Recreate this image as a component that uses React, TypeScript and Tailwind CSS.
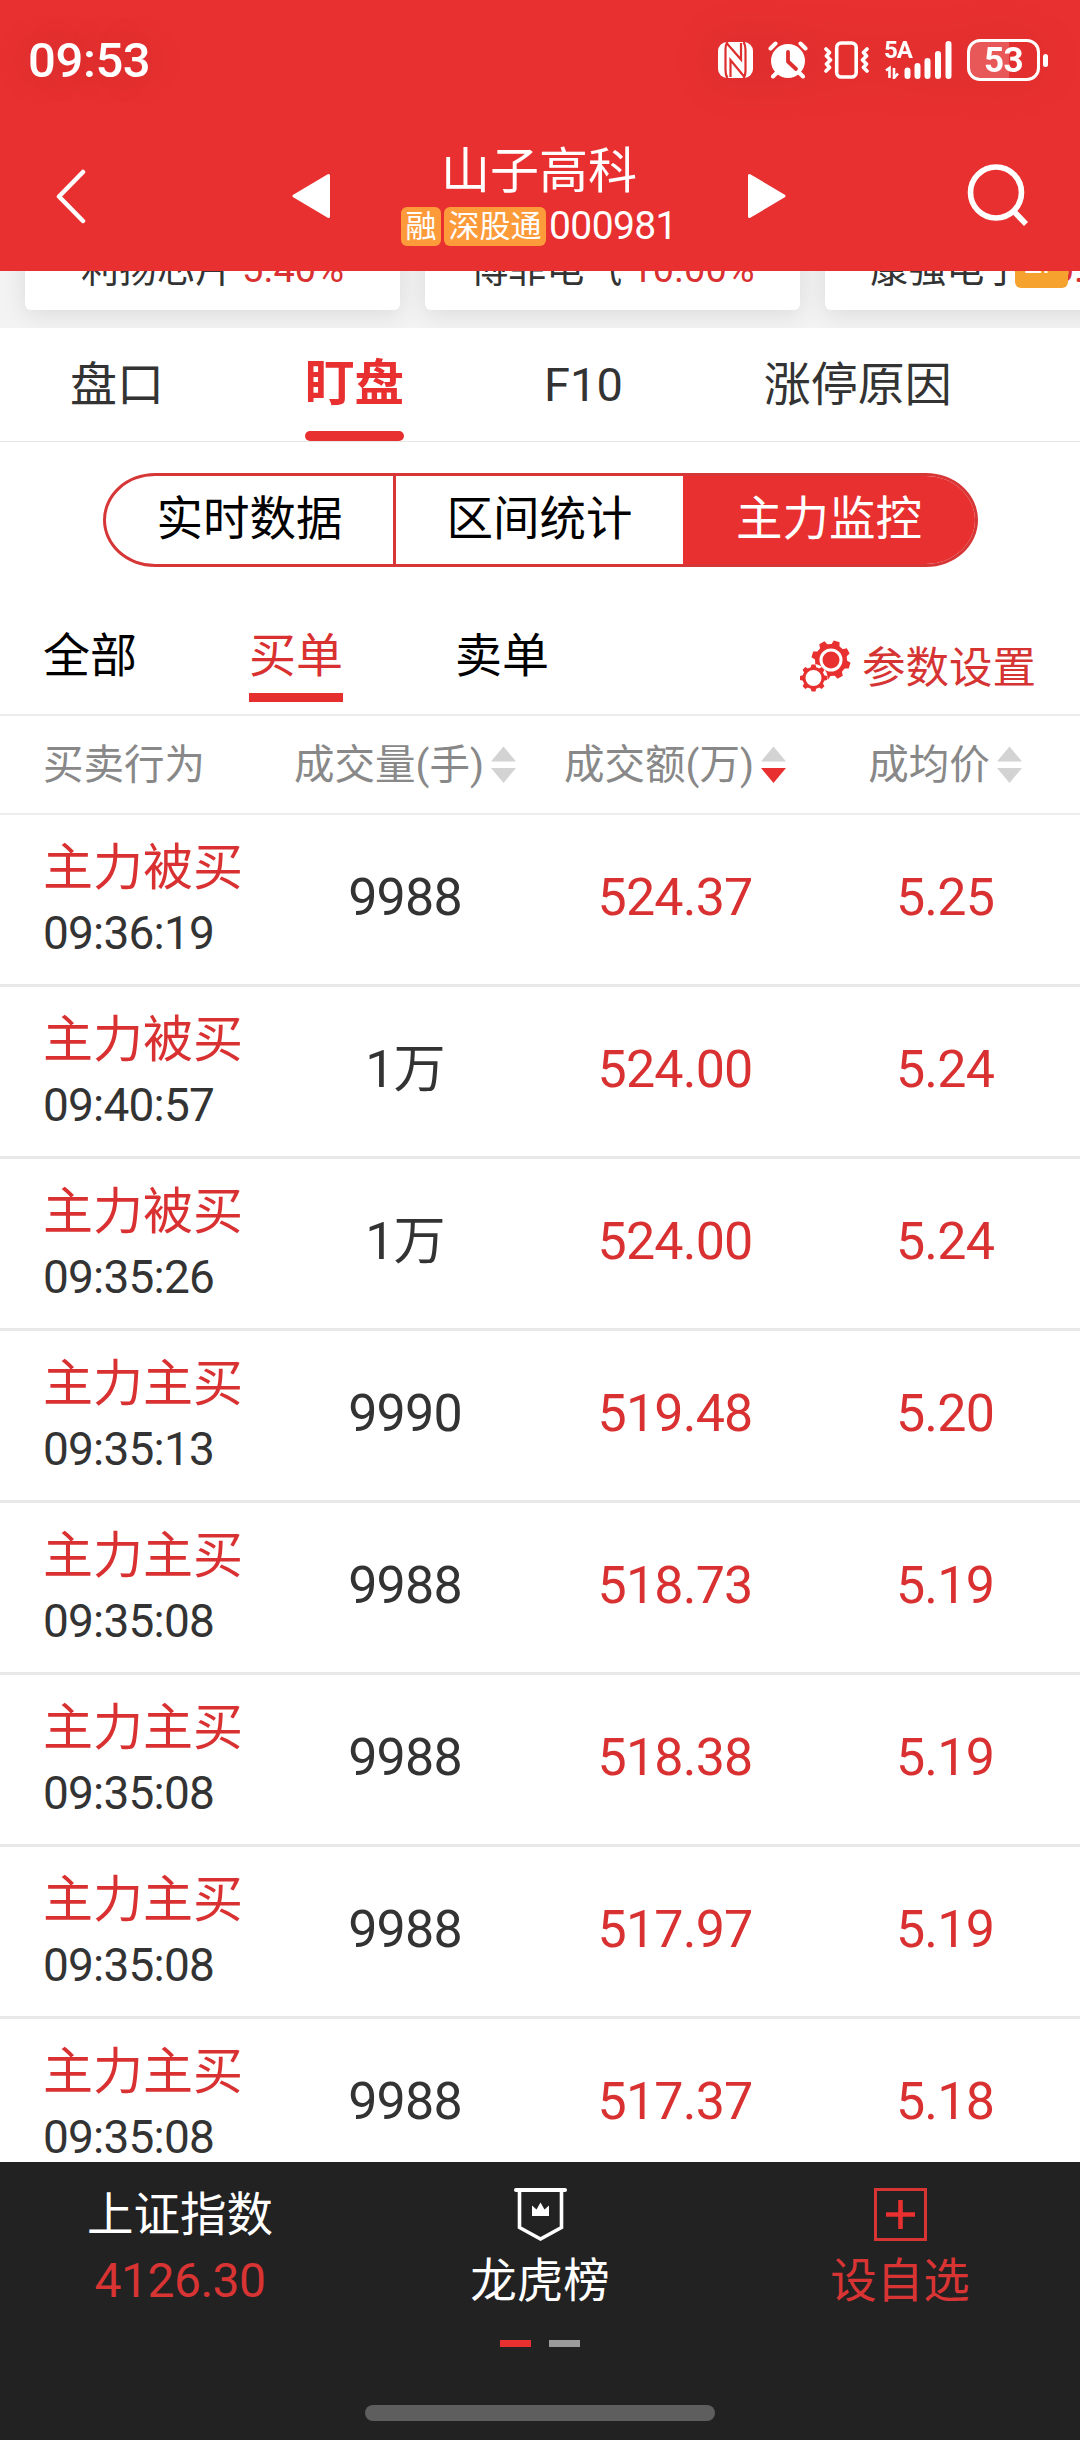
import { clsx } from "clsx";

type Order = {
  action: string;
  time: string;
  volume: string;
  amount: string;
  price: string;
};

const orders: Order[] = [
  { action: "主力被买", time: "09:36:19", volume: "9988", amount: "524.37", price: "5.25" },
  { action: "主力被买", time: "09:40:57", volume: "1万", amount: "524.00", price: "5.24" },
  { action: "主力被买", time: "09:35:26", volume: "1万", amount: "524.00", price: "5.24" },
  { action: "主力主买", time: "09:35:13", volume: "9990", amount: "519.48", price: "5.20" },
  { action: "主力主买", time: "09:35:08", volume: "9988", amount: "518.73", price: "5.19" },
  { action: "主力主买", time: "09:35:08", volume: "9988", amount: "518.38", price: "5.19" },
  { action: "主力主买", time: "09:35:08", volume: "9988", amount: "517.97", price: "5.19" },
  { action: "主力主买", time: "09:35:08", volume: "9988", amount: "517.37", price: "5.18" },
];

const relatedStocks = [
  { name: "利扬芯片", change: "5.40%" },
  { name: "博菲电气", change: "10.00%" },
  { name: "康强电子", change: "10.00%", tag: "ZF" },
];

export default function App() {
  return (
    <div className="flex h-[2440px] w-[1080px] flex-col overflow-hidden bg-white font-['Roboto','Noto_Sans_CJK_SC',sans-serif] text-[#333]">
      <header className="h-[271px] shrink-0 bg-[#e83030] text-white">
        <StatusBar />
        <TitleBar />
      </header>
      <RelatedStocks />
      <MainTabs />
      <SegmentedControl />
      <OrderFilter />
      <TableHeader />
      <div className="min-h-0 flex-1 overflow-hidden">
        {orders.map((order, index) => (
          <OrderRow key={index} order={order} />
        ))}
      </div>
      <BottomBar />
    </div>
  );
}

function StatusBar() {
  return (
    <div className="flex h-[120px] items-center justify-between pl-[28px] pr-[32px]">
      <span className="text-[49px] font-medium leading-none tracking-[-0.4px] [text-shadow:0_0_40px_rgba(0,0,0,0.18)]">
        09:53
      </span>
      <div className="flex items-center drop-shadow-[0_0_24px_rgba(0,0,0,0.1)]">
        <NfcIcon />
        <AlarmIcon />
        <VibrateIcon />
        <SignalIcon />
        <div className="ml-[15px] flex items-center gap-[3px]">
          <div className="flex h-[42px] w-[73px] items-center justify-center rounded-[13px] border-3 border-white bg-linear-to-r from-white/20 from-58% to-transparent to-58% text-[35px] font-bold leading-none tracking-[-0.5px]">
            53
          </div>
          <div className="h-[13px] w-[5px] rounded-full bg-white" />
        </div>
      </div>
    </div>
  );
}

function NfcIcon() {
  return (
    <svg className="h-[36px] w-[35px]" viewBox="0 0 35 36" aria-hidden="true">
      <rect width="35" height="36" rx="9" fill="#fff" />
      <g fill="none" stroke="#df2e2e" strokeWidth="2.200">
        <path d="M9.500 0C8 2 7.500 4 7.500 7v21c0 4 .5 6 2 8" />
        <path d="M25.500 36c1.500-2 2-4 2-7V8c0-4-.5-6-2-8" />
        <path d="M8.500 1L23 17.500V1" />
        <path d="M26.500 35L12.500 18v17" />
      </g>
    </svg>
  );
}

function AlarmIcon() {
  return (
    <svg className="ml-[15px] h-[38px] w-[40px]" viewBox="0 0 40 38" aria-hidden="true">
      <circle cx="20" cy="20" r="17" fill="#fff" />
      <path
        d="M2.500 7.500l5-5M37.500 7.500l-5-5M5 35.500l5-5M35 35.500l-5-5"
        stroke="#fff"
        strokeWidth="4"
        strokeLinecap="round"
      />
      <path
        d="M20 11v9.500l8 7.500"
        fill="none"
        stroke="#df2e2e"
        strokeWidth="3.800"
        strokeLinecap="round"
        strokeLinejoin="round"
      />
    </svg>
  );
}

function VibrateIcon() {
  return (
    <svg className="ml-[16px] h-[38px] w-[45px]" viewBox="0 0 45 38" aria-hidden="true">
      <rect
        x="12.700"
        y="2"
        width="19.500"
        height="34"
        rx="4.500"
        fill="none"
        stroke="#fff"
        strokeWidth="3.600"
      />
      <path
        d="M2 8l3.500 3.500L2.500 15l4 4-4 4 3 3.500L2 30M43 8l-3.500 3.500 3 3.500-4 4 4 4-3 3.500L43 30"
        fill="none"
        stroke="#fff"
        strokeWidth="3.600"
        strokeLinecap="round"
        strokeLinejoin="round"
      />
    </svg>
  );
}

function SignalIcon() {
  return (
    <div className="relative ml-[15px] h-[38px] w-[68px]">
      <span className="absolute left-0 top-0 text-[24px] font-bold leading-[19px] tracking-[-1px]">
        5A
      </span>
      <svg className="h-full w-full" viewBox="0 0 68 38" aria-hidden="true">
        <path
          d="M2 29.500l3.500-2.500v10M10 27v10l4-4.500"
          fill="none"
          stroke="#fff"
          strokeWidth="2.600"
        />
        <path
          d="M23.500 29.500v5.500M33.500 25v10M43.500 20v15M54 13v22M64.500 3v32"
          stroke="#fff"
          strokeWidth="6"
          strokeLinecap="round"
        />
      </svg>
    </div>
  );
}

function TitleBar() {
  return (
    <div className="flex h-[151px] items-start justify-between pl-[55px] pr-[50px]">
      <svg className="mt-[49px] h-[56px] w-[31px]" viewBox="0 0 31 56" aria-hidden="true">
        <path
          d="M28 3L4 27.500 28 52"
          fill="none"
          stroke="#fff"
          strokeWidth="4.500"
          strokeLinecap="round"
          strokeLinejoin="round"
        />
      </svg>

      <div className="ml-[25px] flex items-start">
        <svg className="mt-[53px] h-[46px] w-[39px]" viewBox="0 0 39 46" aria-hidden="true">
          <path
            d="M36.500 2.500v41L2 23z"
            fill="#fff"
            stroke="#fff"
            strokeWidth="3"
            strokeLinejoin="round"
          />
        </svg>
        <div className="flex w-[416px] flex-col items-center pt-[22px]">
          <h1 className="text-[49px] font-normal leading-[60px]">山子高科</h1>
          <div className="mt-[5px] flex items-center gap-[3px] text-[31px]">
            <span className="h-[39px] w-[40px] rounded-[6px] bg-[#fd9a3a] text-center leading-[40px]">
              融
            </span>
            <span className="h-[39px] w-[102px] rounded-[6px] bg-[#fd9a3a] text-center leading-[40px]">
              深股通
            </span>
            <span className="text-[39px] leading-[39px] tracking-[-0.6px]">000981</span>
          </div>
        </div>
        <svg className="mt-[53px] h-[46px] w-[39px]" viewBox="0 0 39 46" aria-hidden="true">
          <path
            d="M2.500 2.500v41L37 23z"
            fill="#fff"
            stroke="#fff"
            strokeWidth="3"
            strokeLinejoin="round"
          />
        </svg>
      </div>

      <svg className="mt-[43px] h-[64px] w-[63px]" viewBox="0 0 63 64" aria-hidden="true">
        <circle cx="29" cy="29.500" r="25.500" fill="none" stroke="#fff" strokeWidth="5.600" />
        <path d="M46 47.500L59 61" stroke="#fff" strokeWidth="5.600" />
      </svg>
    </div>
  );
}

function RelatedStocks() {
  return (
    <div className="flex h-[57px] shrink-0 items-end gap-[25px] overflow-hidden bg-[#f3f3f3] pb-[18px] pl-[25px]">
      {relatedStocks.map((stock) => (
        <div
          key={stock.name}
          className="relative flex h-[120px] w-[375px] shrink-0 items-end justify-center gap-[9px] rounded-[6px] bg-white pb-[16px] text-[38px] leading-[50px] shadow-[0_4px_24px_rgba(0,0,0,0.1)]"
        >
          <span>{stock.name}</span>
          <span className="text-[#d93131]">{stock.change}</span>
          {stock.tag && (
            <span className="absolute bottom-[22px] left-[190px] h-[46px] w-[53px] rounded-[6px] bg-[#f5a32e] text-center text-[30px] leading-[42px] text-white">
              {stock.tag}
            </span>
          )}
        </div>
      ))}
    </div>
  );
}

function MainTabs() {
  return (
    <nav className="flex h-[114px] shrink-0 gap-[141px] border-b border-[#e6e6e6] pl-[70px] text-[47px] leading-[113px]">
      <span>盘口</span>
      <span className="flex flex-col text-[49.500px] font-bold text-[#e83030]">
        <span className="h-[103px]">盯盘</span>
        <span className="h-[10px] rounded-full bg-[#e83030]" />
      </span>
      <span className="-ml-px">F10</span>
      <span>涨停原因</span>
    </nav>
  );
}

function SegmentedControl() {
  return (
    <div className="mx-[103px] mt-[31px] grid h-[94px] w-[875px] shrink-0 grid-cols-[287px_290px_1fr] overflow-hidden rounded-[52px/47px] border-3 border-[#d63636] text-center text-[46.500px] leading-[87px] text-black">
      <span>实时数据</span>
      <span className="border-l-3 border-[#d63636]">区间统计</span>
      <span className="bg-[#e83030] text-white">主力监控</span>
    </div>
  );
}

function OrderFilter() {
  return (
    <div className="flex h-[149px] shrink-0 items-start border-b-2 border-[#ececec] pl-[43px] pr-[44px] text-[47px] leading-[60px] text-black">
      <span className="mt-[59px]">全部</span>
      <span className="ml-[112px] mt-[59px] border-b-[9px] border-[#e52e2e] pb-[7px] text-[#d93131]">
        买单
      </span>
      <span className="ml-[112px] mt-[59px]">卖单</span>
      <div className="ml-auto mt-[66px] flex items-center gap-[11px] text-[43.500px] text-[#d63333]">
        <GearsIcon />
        <span className="pt-[6px]">参数设置</span>
      </div>
    </div>
  );
}

const toothAngles = [0, 45, 90, 135, 180, 225, 270, 315];

function GearsIcon() {
  return (
    <svg className="h-[54px] w-[51px]" viewBox="0 0 51 54" fill="#e83030" aria-hidden="true">
      <circle cx="31" cy="21" r="16" />
      {toothAngles.map((angle) => (
        <path
          key={angle}
          d="M26.500 7l1.500-5.500h6l1.500 5.500z"
          transform={`rotate(${angle + 17} 31 21)`}
        />
      ))}
      <circle cx="31" cy="21" r="10" fill="none" stroke="#fff" strokeWidth="3" />
      <circle cx="13.500" cy="39" r="14" fill="#fff" />
      <circle cx="13.500" cy="39" r="9.500" fill="none" stroke="#e83030" strokeWidth="3" />
      {toothAngles.map((angle) => (
        <path
          key={angle}
          d="M10.500 29.500l1-4h4l1 4z"
          transform={`rotate(${angle} 13.500 39)`}
        />
      ))}
    </svg>
  );
}

function SortArrows({ descending = false }: { descending?: boolean }) {
  return (
    <svg className="h-[38px] w-[25px]" viewBox="0 0 25 38" aria-hidden="true">
      <path d="M12.500 0.500L25 15.500H0z" fill="#d3d3d3" />
      <path d="M0 22h25L12.500 37z" fill={descending ? "#e83030" : "#d3d3d3"} />
    </svg>
  );
}

function TableHeader() {
  return (
    <div className="grid h-[99px] shrink-0 grid-cols-4 items-center border-b-2 border-[#ececec] text-[40.500px] leading-[60px] text-[#888]">
      <span className="pl-[43px]">买卖行为</span>
      <span className="flex items-center justify-center gap-[7px] whitespace-nowrap">
        成交量(手)
        <SortArrows />
      </span>
      <span className="flex items-center justify-center gap-[7px] whitespace-nowrap">
        成交额(万)
        <SortArrows descending />
      </span>
      <span className="flex items-center justify-center gap-[7px] whitespace-nowrap">
        成均价
        <SortArrows />
      </span>
    </div>
  );
}

function OrderRow({ order }: { order: Order }) {
  return (
    <div className="grid h-[172px] grid-cols-4 items-center border-b-3 border-[#e9e9e9] text-center text-[52px] leading-[60px] tracking-[-0.8px]">
      <div className="pl-[43px] text-left">
        <div className="text-[50px] leading-[66px] tracking-normal text-[#d93131]">
          {order.action}
        </div>
        <div className="text-[46px] leading-[64px] tracking-[-0.8px]">{order.time}</div>
      </div>
      <Cell value={order.volume} />
      <Cell value={order.amount} red />
      <Cell value={order.price} red />
    </div>
  );
}

function Cell({ value, red = false }: { value: string; red?: boolean }) {
  return <span className={clsx("pb-[3px]", red && "text-[#d93131]")}>{value}</span>;
}

function BottomBar() {
  return (
    <footer className="h-[278px] shrink-0 bg-[#222] text-[46.500px] leading-[66px] text-white">
      <div className="grid h-[178px] grid-cols-3">
        <div className="flex flex-col items-center pt-[20px]">
          <span>上证指数</span>
          <span className="text-[48px] tracking-[-0.5px] text-[#d93434]">4126.30</span>
        </div>
        <div className="flex flex-col items-center pt-[26px]">
          <svg className="h-[60px] w-[53px]" viewBox="0 0 53 60" fill="none" aria-hidden="true">
            <path d="M2 2h49" stroke="#fff" strokeWidth="4" strokeLinecap="round" />
            <path d="M5.500 3v36.500l21 11.500 21-11.500V3" stroke="#fff" strokeWidth="3.600" />
            <path d="M18 28V17.500l4.500 4 4-7 4 7 4.500-4V28z" fill="#fff" />
          </svg>
          <span>龙虎榜</span>
        </div>
        <div className="flex flex-col items-center pt-[26px] text-[#d93434]">
          <svg className="h-[60px] w-[53px]" viewBox="0 0 53 60" fill="none" aria-hidden="true">
            <rect x="1.500" y="1.500" width="50" height="50" stroke="#d93434" strokeWidth="3" />
            <path d="M26.500 12v29M12 26.500h29" stroke="#e83030" strokeWidth="4.600" />
          </svg>
          <span>设自选</span>
        </div>
      </div>
      <div className="flex justify-center gap-[18px]">
        <span className="h-[7px] w-[31px] bg-[#e83030]" />
        <span className="h-[7px] w-[31px] bg-[#9b9b9b]" />
      </div>
      <div className="mx-auto mt-[58px] h-[16px] w-[350px] rounded-full bg-[#5e5e5e]" />
    </footer>
  );
}
